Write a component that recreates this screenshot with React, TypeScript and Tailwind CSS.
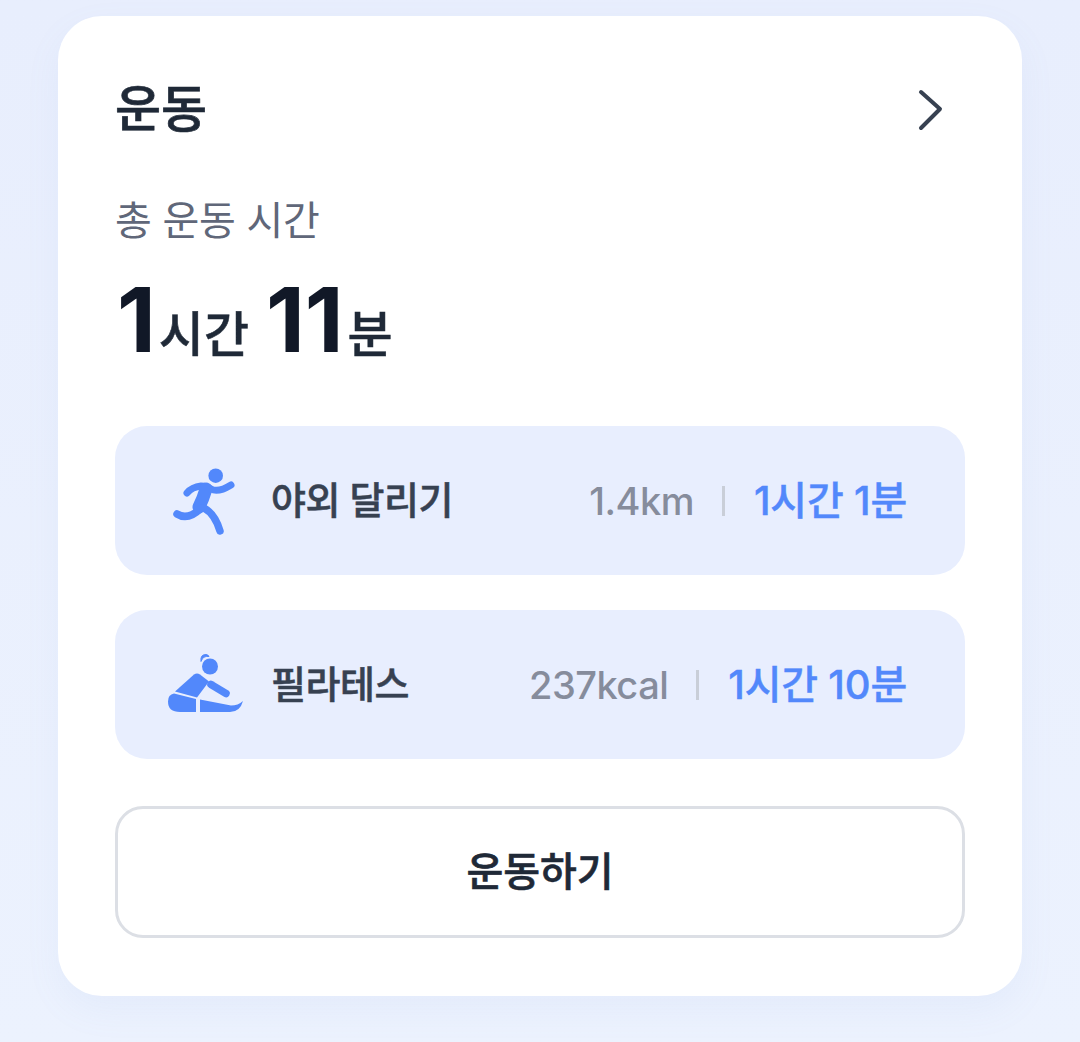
import React from "react";

const font = { fontFamily: '"Inter","Noto Sans CJK KR",sans-serif' };

function Run() {
  return (
    <svg width="80" height="80" viewBox="0 0 80 80" fill="none" className="ml-[5px] shrink-0">
      <circle cx="50.7" cy="14.7" r="7.3" fill="#5288fb" />
      <path d="M22 32 Q27 26 36 25 Q42 25 46 28 Q53 32 66 24" stroke="#5288fb" strokeWidth="7" strokeLinecap="round" strokeLinejoin="round" />
      <path d="M41 28 Q38 38 34 46" stroke="#5288fb" strokeWidth="13" strokeLinecap="round" />
      <path d="M39 47 Q50 53 55 70" stroke="#5288fb" strokeWidth="7.5" strokeLinecap="round" />
      <path d="M12 53 Q23 60 36 47" stroke="#5288fb" strokeWidth="7.5" strokeLinecap="round" />
    </svg>
  );
}

function Stretch() {
  return (
    <svg width="90" height="70" viewBox="0 1.5 90 70" fill="none" className="shrink-0">
      <circle cx="50" cy="18" r="8" fill="#5288fb" />
      <path d="M41 13 Q40 6 46 6 Q48 6 49 8 Q43 7 41 13Z" fill="#5288fb" stroke="#5288fb" strokeWidth="1" strokeLinejoin="round" />
      <path d="M15 43 L34 26 Q37 24 40 26 L49 33 L37 49 Z" fill="#5288fb" />
      <path d="M51 36 L66 45" stroke="#5288fb" strokeWidth="7.5" strokeLinecap="round" />
      <path d="M14 45 L36 50.5 L36 63.5 L20 63.5 Q8 63.5 8 53 Q8 46 14 45Z" fill="#5288fb" />
      <path d="M40 51 L71 57 Q78 57 83 52.5 Q80 63.5 70 63.5 L40 63.5 Z" fill="#5288fb" />
    </svg>
  );
}

function Row({ icon, name, stat, time }: { icon: React.ReactNode; name: string; stat: string; time: React.ReactNode }) {
  return (
    <div className="flex h-[149px] items-center rounded-[32px] bg-[#e8eefe] pl-[45px] pr-[58px]">
      <div className="flex w-[111px] items-center">{icon}</div>
      <span className="text-[38px] font-medium tracking-[-0.5px] text-[#374151] [-webkit-text-stroke:0.5px_#374151]">{name}</span>
      <span className="ml-auto mt-[2px] text-[38px] font-medium tracking-[-0.5px] text-[#868c9c]">{stat}</span>
      <span className="ml-[28px] mr-[29px] h-[30px] w-[3px] bg-[#c9ced8]" />
      <span className="mt-[1px] text-[40px] font-medium tracking-[-0.2px] text-[#5288fb] [-webkit-text-stroke:0.4px_#5288fb]">{time}</span>
    </div>
  );
}

export default function App() {
  return (
    <div style={font} className="h-[1042px] w-[1080px] overflow-hidden bg-gradient-to-b from-[#e8eefd] to-[#ecf2fe] px-[58px] pt-[16px]">
      <div className="flex h-[980px] flex-col rounded-[44px] bg-white px-[57px] shadow-[0_14px_36px_rgba(130,150,210,0.07)]">
        <div className="mt-[60px] flex h-[66px] items-center justify-between">
          <span className="text-[50px] font-medium text-[#1f2937] [-webkit-text-stroke:0.7px_#1f2937]">운동</span>
          <svg width="30" height="44" viewBox="0 0 30 44" fill="none" className="mr-[19px]">
            <path d="M5 5 L24 22 L5 41" stroke="#374151" strokeWidth="4" strokeLinecap="round" strokeLinejoin="round" />
          </svg>
        </div>
        <div className="mt-[54px] text-[40px] leading-[50px] tracking-[-0.3px] text-[#606779]">총 운동 시간</div>
        <div className="mt-[31px] flex h-[86px] items-baseline font-bold text-[#111827]">
          <span className="ml-[2px] text-[90px] leading-[86px]">1</span>
          <span className="ml-[3px] text-[49px] font-medium text-[#1f2937] [-webkit-text-stroke:0.5px_#1f2937]">시간</span>
          <span className="ml-[17px] text-[90px] leading-[86px]">11</span>
          <span className="ml-[4px] text-[49px] font-medium text-[#1f2937] [-webkit-text-stroke:0.5px_#1f2937]">분</span>
        </div>
        <div className="mt-[63px] flex flex-col gap-[35px]">
          <Row
            icon={<Run />}
            name="야외 달리기"
            stat="1.4km"
            time={<><span>1</span>시간 <span>1</span>분</>}
          />
          <Row
            icon={<Stretch />}
            name="필라테스"
            stat="237kcal"
            time={<><span>1</span>시간 <span>10</span>분</>}
          />
        </div>
        <div className="mt-[47px] flex h-[132px] items-center justify-center rounded-[28px] border-[3px] border-[#dcdfe5] text-[40px] font-medium text-[#1f2937] [-webkit-text-stroke:0.6px_#1f2937]">
          운동하기
        </div>
      </div>
    </div>
  );
}
